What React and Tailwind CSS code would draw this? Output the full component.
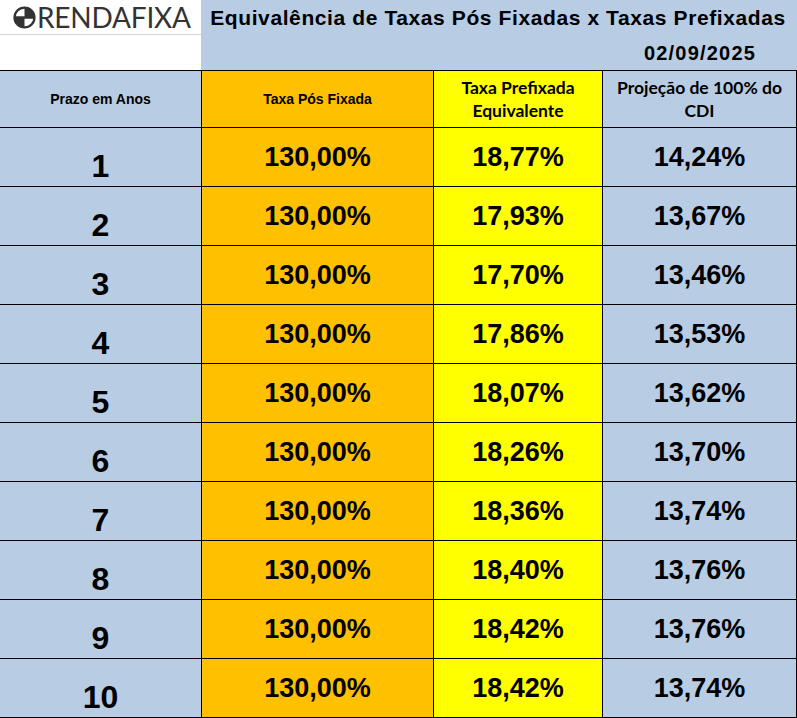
import React from 'react';

const rows = [
    { prazo: '1', pos: '130,00%', pre: '18,77%', cdi: '14,24%' },
    { prazo: '2', pos: '130,00%', pre: '17,93%', cdi: '13,67%' },
    { prazo: '3', pos: '130,00%', pre: '17,70%', cdi: '13,46%' },
    { prazo: '4', pos: '130,00%', pre: '17,86%', cdi: '13,53%' },
    { prazo: '5', pos: '130,00%', pre: '18,07%', cdi: '13,62%' },
    { prazo: '6', pos: '130,00%', pre: '18,26%', cdi: '13,70%' },
    { prazo: '7', pos: '130,00%', pre: '18,36%', cdi: '13,74%' },
    { prazo: '8', pos: '130,00%', pre: '18,40%', cdi: '13,76%' },
    { prazo: '9', pos: '130,00%', pre: '18,42%', cdi: '13,76%' },
    { prazo: '10', pos: '130,00%', pre: '18,42%', cdi: '13,74%' },
];

function LogoMark() {
    // circulo com quadrantes opostos preenchidos
    return (
        <svg width="23" height="23" viewBox="0 0 24 24">
            <circle cx="12" cy="12" r="10.4" fill="none" stroke="#333" strokeWidth="2.4" />
            <path d="M12 12 L12 1.6 A10.4 10.4 0 0 1 22.4 12 Z" fill="#333" />
            <path d="M12 12 L12 22.4 A10.4 10.4 0 0 1 1.6 12 Z" fill="#333" />
            <rect x="1.5" y="10.7" width="21" height="2.6" fill="#333" />
        </svg>
    );
}

export default function App() {
    const arial = { fontFamily: '"Liberation Sans", Arial, sans-serif' };
    const calibri = { fontFamily: 'Lato, "Liberation Sans", sans-serif' };

    return (
        <div className="w-[797px] h-[718px] bg-white text-black overflow-hidden" style={arial}>
            {/* topo */}
            <div className="flex h-[70px]">
                <div className="w-[201px] bg-white">
                    <div className="h-[35px] border-b border-[#d4d4d4] flex items-center pl-[13px] gap-[1px]">
                        <LogoMark />
                        <span className="text-[28px] leading-none text-[#333] tracking-[-0.2px]" style={{ fontFamily: 'Lato, sans-serif' }}>RENDAFIXA</span>
                    </div>
                </div>
                <div className="flex-1 bg-[#b8cce4] flex flex-col">
                    <div className="h-[35px] flex items-center justify-center font-bold text-[21px] tracking-[0.6px] pr-[2px]">
                        Equivalência de Taxas Pós Fixadas x Taxas Prefixadas
                    </div>
                    <div className="h-[35px] flex items-center pl-[402px]">
                        <div className="w-[194px] text-center font-bold text-[20px] tracking-[1.2px]">02/09/2025</div>
                    </div>
                </div>
            </div>

            {/* tabela */}
            <div className="border-t border-black">
                <div className="grid grid-cols-[202px_232px_169px_194px] h-[57px] border-b border-black">
                    <div className="bg-[#b8cce4] border-r border-black flex items-center justify-center font-bold text-[14px]">Prazo em Anos</div>
                    <div className="bg-[#ffc000] border-r border-black flex items-center justify-center font-bold text-[14px]">Taxa Pós Fixada</div>
                    <div className="bg-[#ffff00] border-r border-black flex items-center justify-center text-center font-bold text-[17.5px] leading-[23px]" style={calibri}>
                        Taxa Prefixada<br />Equivalente
                    </div>
                    <div className="bg-[#b8cce4] border-r border-black flex items-center justify-center text-center font-bold text-[17.5px] leading-[23px]" style={calibri}>
                        Projeção de 100% do<br />CDI
                    </div>
                </div>

                {rows.map((r) => (
                    <div key={r.prazo} className="grid grid-cols-[202px_232px_169px_194px] h-[59px] border-b border-black">
                        <div className="bg-[#b8cce4] border-r border-black flex items-end justify-center pb-1 font-bold text-[32px] leading-none">{r.prazo}</div>
                        <div className="bg-[#ffc000] border-r border-black flex items-center justify-center font-bold text-[27px] leading-none">{r.pos}</div>
                        <div className="bg-[#ffff00] border-r border-black flex items-center justify-center font-bold text-[27px] leading-none">{r.pre}</div>
                        <div className="bg-[#b8cce4] border-r border-black flex items-center justify-center font-bold text-[27px] leading-none">{r.cdi}</div>
                    </div>
                ))}
            </div>
        </div>
    );
}
